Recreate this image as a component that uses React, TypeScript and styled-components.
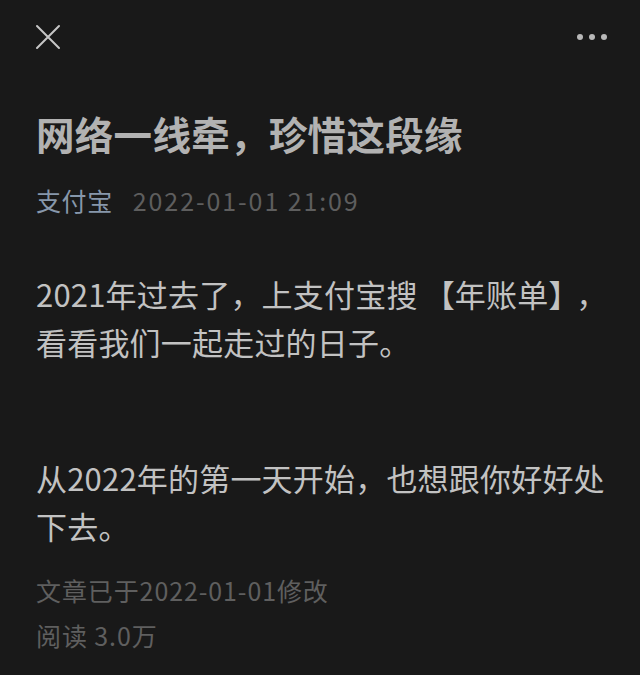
import React from "react";
import styled, { createGlobalStyle } from "styled-components";

const Global = createGlobalStyle`
  html, body {
    margin: 0;
    padding: 0;
    background: #191919;
  }
  body {
    font-family: "Noto Sans CJK SC", "Noto Sans", sans-serif;
  }
`;

const Page = styled.div`
  width: 640px;
  min-height: 675px;
  background: #191919;
  box-sizing: border-box;
  padding: 0 36px;
  display: flex;
  flex-direction: column;
`;

const Header = styled.header`
  height: 74px;
  display: flex;
  align-items: center;
  justify-content: space-between;
  margin: 0 -4px 0 -1px;
`;

const IconButton = styled.button`
  background: none;
  border: 0;
  padding: 0;
  display: flex;
  align-items: center;
  justify-content: center;
  cursor: pointer;
`;

const Title = styled.h1`
  margin: 34px 0 0;
  font-size: 38.5px;
  line-height: 50px;
  font-weight: 700;
  color: #b2b2b2;
  letter-spacing: 0.3px;
  white-space: nowrap;
`;

const Meta = styled.div`
  margin-top: 24px;
  display: flex;
  align-items: center;
  gap: 20px;
  font-size: 25px;
  line-height: 36px;
`;

const Author = styled.span`
  color: #8797ab;
  letter-spacing: 0.6px;
`;

const Time = styled.span`
  color: #5e5e5e;
  letter-spacing: 1.9px;
`;

const Paragraph = styled.p<{ $gap: number }>`
  margin: ${(p) => p.$gap}px 0 0;
  font-size: 31px;
  line-height: 48px;
  color: #c2c2c2;
  letter-spacing: 0.2px;
`;

const Line = styled.span`
  display: block;
  white-space: nowrap;
`;

const Bracket = styled.span<{ $before?: number; $after?: number }>`
  margin-left: ${(p) => p.$before ?? 0}px;
  margin-right: ${(p) => p.$after ?? 0}px;
`;

const Footer = styled.div`
  margin-top: 18px;
  display: flex;
  flex-direction: column;
  font-size: 25px;
  line-height: 45px;
  color: #5f5f5f;
  letter-spacing: 0.9px;
`;

const CloseIcon = () => (
  <svg width="26" height="26" viewBox="0 0 26 26" fill="none">
    <path d="M2 2 L24 24 M24 2 L2 24" stroke="#c6c6c6" strokeWidth="2" strokeLinecap="round" />
  </svg>
);

const MoreIcon = () => (
  <svg width="32" height="8" viewBox="0 0 32 8">
    <circle cx="4" cy="4" r="3" fill="#b8b8b8" />
    <circle cx="16" cy="4" r="3" fill="#b8b8b8" />
    <circle cx="28" cy="4" r="3" fill="#b8b8b8" />
  </svg>
);

export default function App() {
  return (
    <>
      <Global />
      <Page>
        <Header>
          <IconButton aria-label="关闭">
            <CloseIcon />
          </IconButton>
          <IconButton aria-label="更多">
            <MoreIcon />
          </IconButton>
        </Header>
        <Title>网络一线牵，珍惜这段缘</Title>
        <Meta>
          <Author>支付宝</Author>
          <Time>2022-01-01 21:09</Time>
        </Meta>
        <Paragraph $gap={52}>
          <Line>
            2021年过去了，上支付宝搜<Bracket $before={6}>【</Bracket>年账单
            <Bracket $after={12}>】</Bracket>，
          </Line>
          <Line>看看我们一起走过的日子。</Line>
        </Paragraph>
        <Paragraph $gap={88}>
          <Line>从2022年的第一天开始，也想跟你好好处</Line>
          <Line>下去。</Line>
        </Paragraph>
        <Footer>
          <span>文章已于2022-01-01修改</span>
          <span>阅读 3.0万</span>
        </Footer>
      </Page>
    </>
  );
}
